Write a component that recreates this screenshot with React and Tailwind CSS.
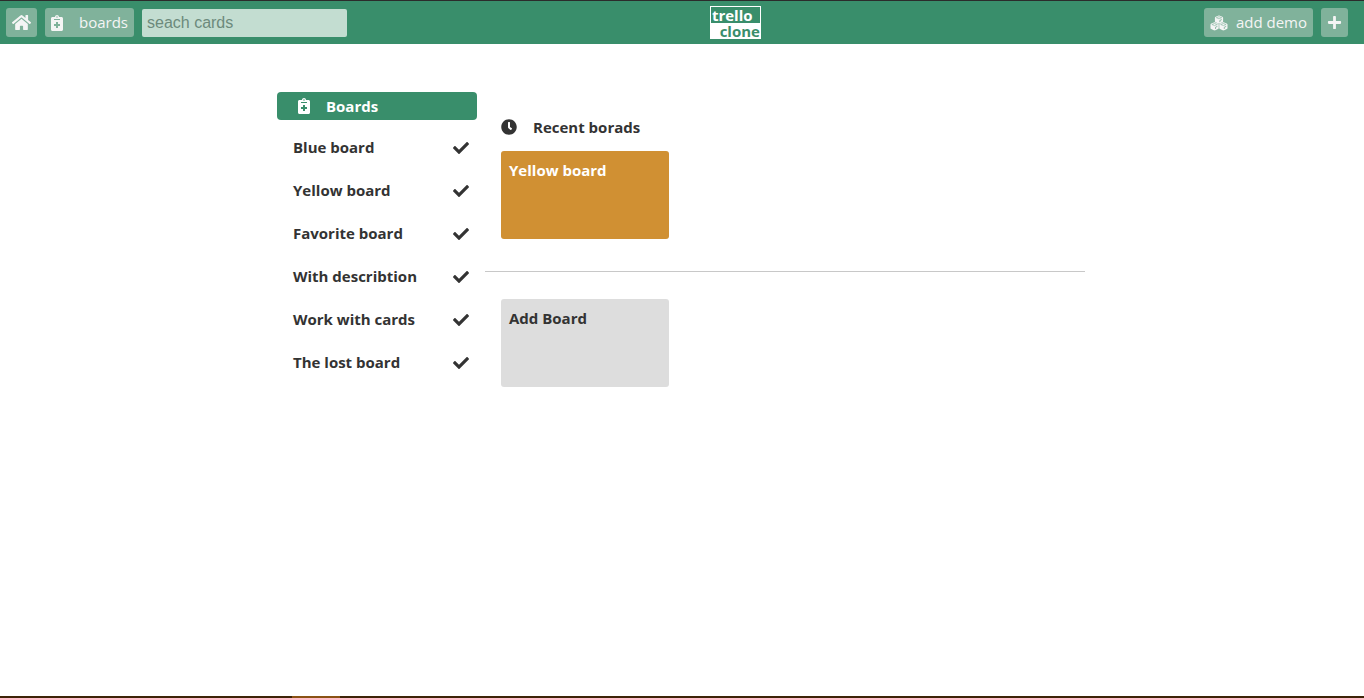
import { FaCheck, FaClock, FaHome, FaNotesMedical, FaPlus } from "react-icons/fa";

const boards = [
  "Blue board",
  "Yellow board",
  "Favorite board",
  "With describtion",
  "Work with cards",
  "The lost board",
];

const barButton = "flex h-[29px] items-center rounded-[3px] bg-[#80b29b] text-[#f5f5f5]";

function Cube({ x, y }) {
  return (
    <g transform={`translate(${x} ${y})`}>
      <path
        fill="currentColor"
        d="M0-4.1c.3 0 .6.1.8.2l2.5 1c.5.2.8.6.8 1.1v3.4c0 .5-.3.9-.8 1.1L.8 3.9c-.5.2-1.1.2-1.6 0l-2.5-1.2c-.5-.2-.8-.6-.8-1.1v-3.4c0-.5.3-.9.8-1.1l2.5-1c.2-.1.5-.2.8-.2z"
      />
      <path fill="none" stroke="#80b29b" strokeWidth="0.6" d="M-2.7-1.9 0-.8l2.7-1.1L0-2.9z" />
      <path fill="none" stroke="#80b29b" strokeWidth="0.9" d="M.9 2.5V.8L2.8 0" />
    </g>
  );
}

function CubesIcon() {
  return (
    <svg viewBox="0 0 18 16" className="h-4 w-[18px]" aria-hidden="true">
      <Cube x={9} y={4.6} />
      <Cube x={4.6} y={11.4} />
      <Cube x={13.4} y={11.4} />
    </svg>
  );
}

function Header() {
  return (
    <header className="flex h-11 items-center border-t border-[#2b2b2b] bg-[#398e6b] pr-4 pl-1.5">
      <nav className="flex items-center gap-2">
        <a href="#home" aria-label="Home" className={`${barButton} px-1.5`}>
          <FaHome size={19} />
        </a>
        <a href="#boards" className={`${barButton} px-1.5`}>
          <FaNotesMedical size={16} className="mr-3.5 -ml-0.5" />
          boards
        </a>
        <input
          type="search"
          aria-label="Search cards"
          placeholder="seach cards"
          className="h-7 w-[205px] rounded-[2px] bg-[#c3ddd1] px-[5px] font-['Liberation_Sans',sans-serif] text-base text-[#333] outline-none placeholder:text-[#6c8a7c]"
        />
      </nav>
      <div className="flex flex-1 justify-center pr-20">
        <a href="#home" className="w-[51px] border border-b-0 border-white bg-white text-[15px] leading-4 font-bold">
          <span className="block bg-[#398e6b] pl-px text-white">trello</span>
          <span className="block text-right text-[#398e6b]">clone</span>
        </a>
      </div>
      <div className="flex items-center gap-2">
        <button type="button" className={`${barButton} gap-2 pr-1.5 pl-1.5`}>
          <CubesIcon />
          add demo
        </button>
        <button type="button" aria-label="Add" className={`${barButton} px-1.5`}>
          <FaPlus size={15} />
        </button>
      </div>
    </header>
  );
}

function Sidebar() {
  return (
    <aside className="w-[200px] shrink-0">
      <h2 className="flex h-7 items-center gap-3.5 rounded-[4px] bg-[#398e6b] pl-[19px] text-white">
        <FaNotesMedical size={16} />
        Boards
      </h2>
      <ul className="pt-1.5">
        {boards.map((name) => (
          <li key={name}>
            <a href="#board" className="flex h-[43px] items-center justify-between pr-2 pl-4">
              {name}
              <FaCheck size={16} />
            </a>
          </li>
        ))}
      </ul>
    </aside>
  );
}

export default function App() {
  return (
    <div className="flex min-h-screen flex-col bg-white font-['Open_Sans',sans-serif] text-[15px] text-[#333]">
      <Header />
      <div className="mx-auto flex w-full max-w-[810px] flex-1 gap-2 pt-12 font-bold">
        <Sidebar />
        <main className="max-w-[600px] flex-1">
          <section className="border-b border-[#c8c8c8] px-4 pt-6 pb-8">
            <h2 className="flex h-[22px] items-center gap-4">
              <FaClock size={16} />
              Recent borads
            </h2>
            <a href="#board" className="mt-[13px] block h-[88px] w-[168px] rounded-[3px] bg-[#d09033] p-2 text-white">
              Yellow board
            </a>
          </section>
          <section className="px-4 pt-[27px]">
            <button
              type="button"
              className="flex h-[88px] w-[168px] items-start rounded-[3px] bg-[#ddd] p-2"
            >
              Add Board
            </button>
          </section>
        </main>
      </div>
      <footer className="flex h-0.5 bg-[#3d2307] pl-[292px]">
        <div className="w-12 bg-[#8a5214]" />
      </footer>
    </div>
  );
}
